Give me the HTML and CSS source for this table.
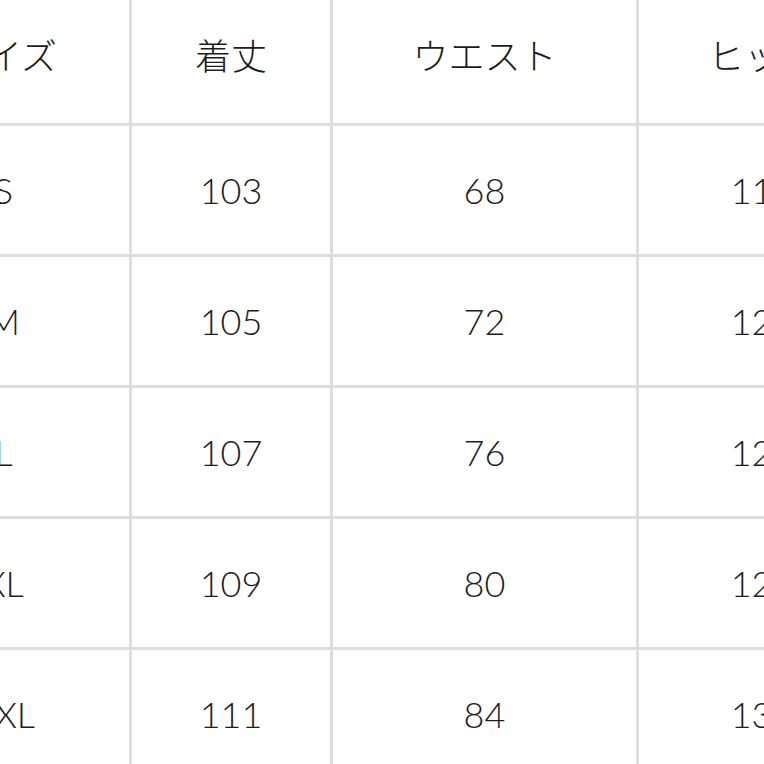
FILE: index.html
```html
<!DOCTYPE html>
<html lang="ja">
<head>
<meta charset="utf-8">
<title>サイズ表</title>
<link rel="stylesheet" href="styles.css">
</head>
<body>
<div class="frame">
  <table class="size-table">
    <colgroup>
      <col class="c1"><col class="c2"><col class="c3"><col class="c4">
    </colgroup>
    <tr class="head"><td>サイズ</td><td>着丈</td><td>ウエスト</td><td>ヒップ</td></tr>
    <tr><td>S</td><td>103</td><td>68</td><td>116</td></tr>
    <tr><td>M</td><td>105</td><td>72</td><td>120</td></tr>
    <tr><td>L</td><td>107</td><td>76</td><td>124</td></tr>
    <tr><td>XL</td><td>109</td><td>80</td><td>128</td></tr>
    <tr><td>XXL</td><td>111</td><td>84</td><td>132</td></tr>
  </table>
</div>
</body>
</html>
```

FILE: styles.css
```css
html, body {
  margin: 0;
  padding: 0;
  background: #ffffff;
}

.frame {
  width: 764px;
  height: 764px;
  overflow: hidden;
}

.size-table {
  margin-left: -122px;
  margin-top: -5px;
  border-collapse: separate;
  border-spacing: 0;
  table-layout: fixed;
  width: 1010px;
  font-family: "Lato", "Noto Sans CJK JP", sans-serif;
  font-size: 36px;
  font-weight: 300;
  color: #1c1c1c;
}

.c1 { width: 254px; }
.c2 { width: 201px; }
.c3 { width: 306px; }
.c4 { width: 249px; }

.size-table td {
  padding: 0;
  line-height: 128px;
  text-align: center;
  white-space: nowrap;
  border-right: 3px solid #dedede;
  border-bottom: 3px solid #dedede;
}

.head td {
  padding-bottom: 6px;
  line-height: 122px;
}
```
